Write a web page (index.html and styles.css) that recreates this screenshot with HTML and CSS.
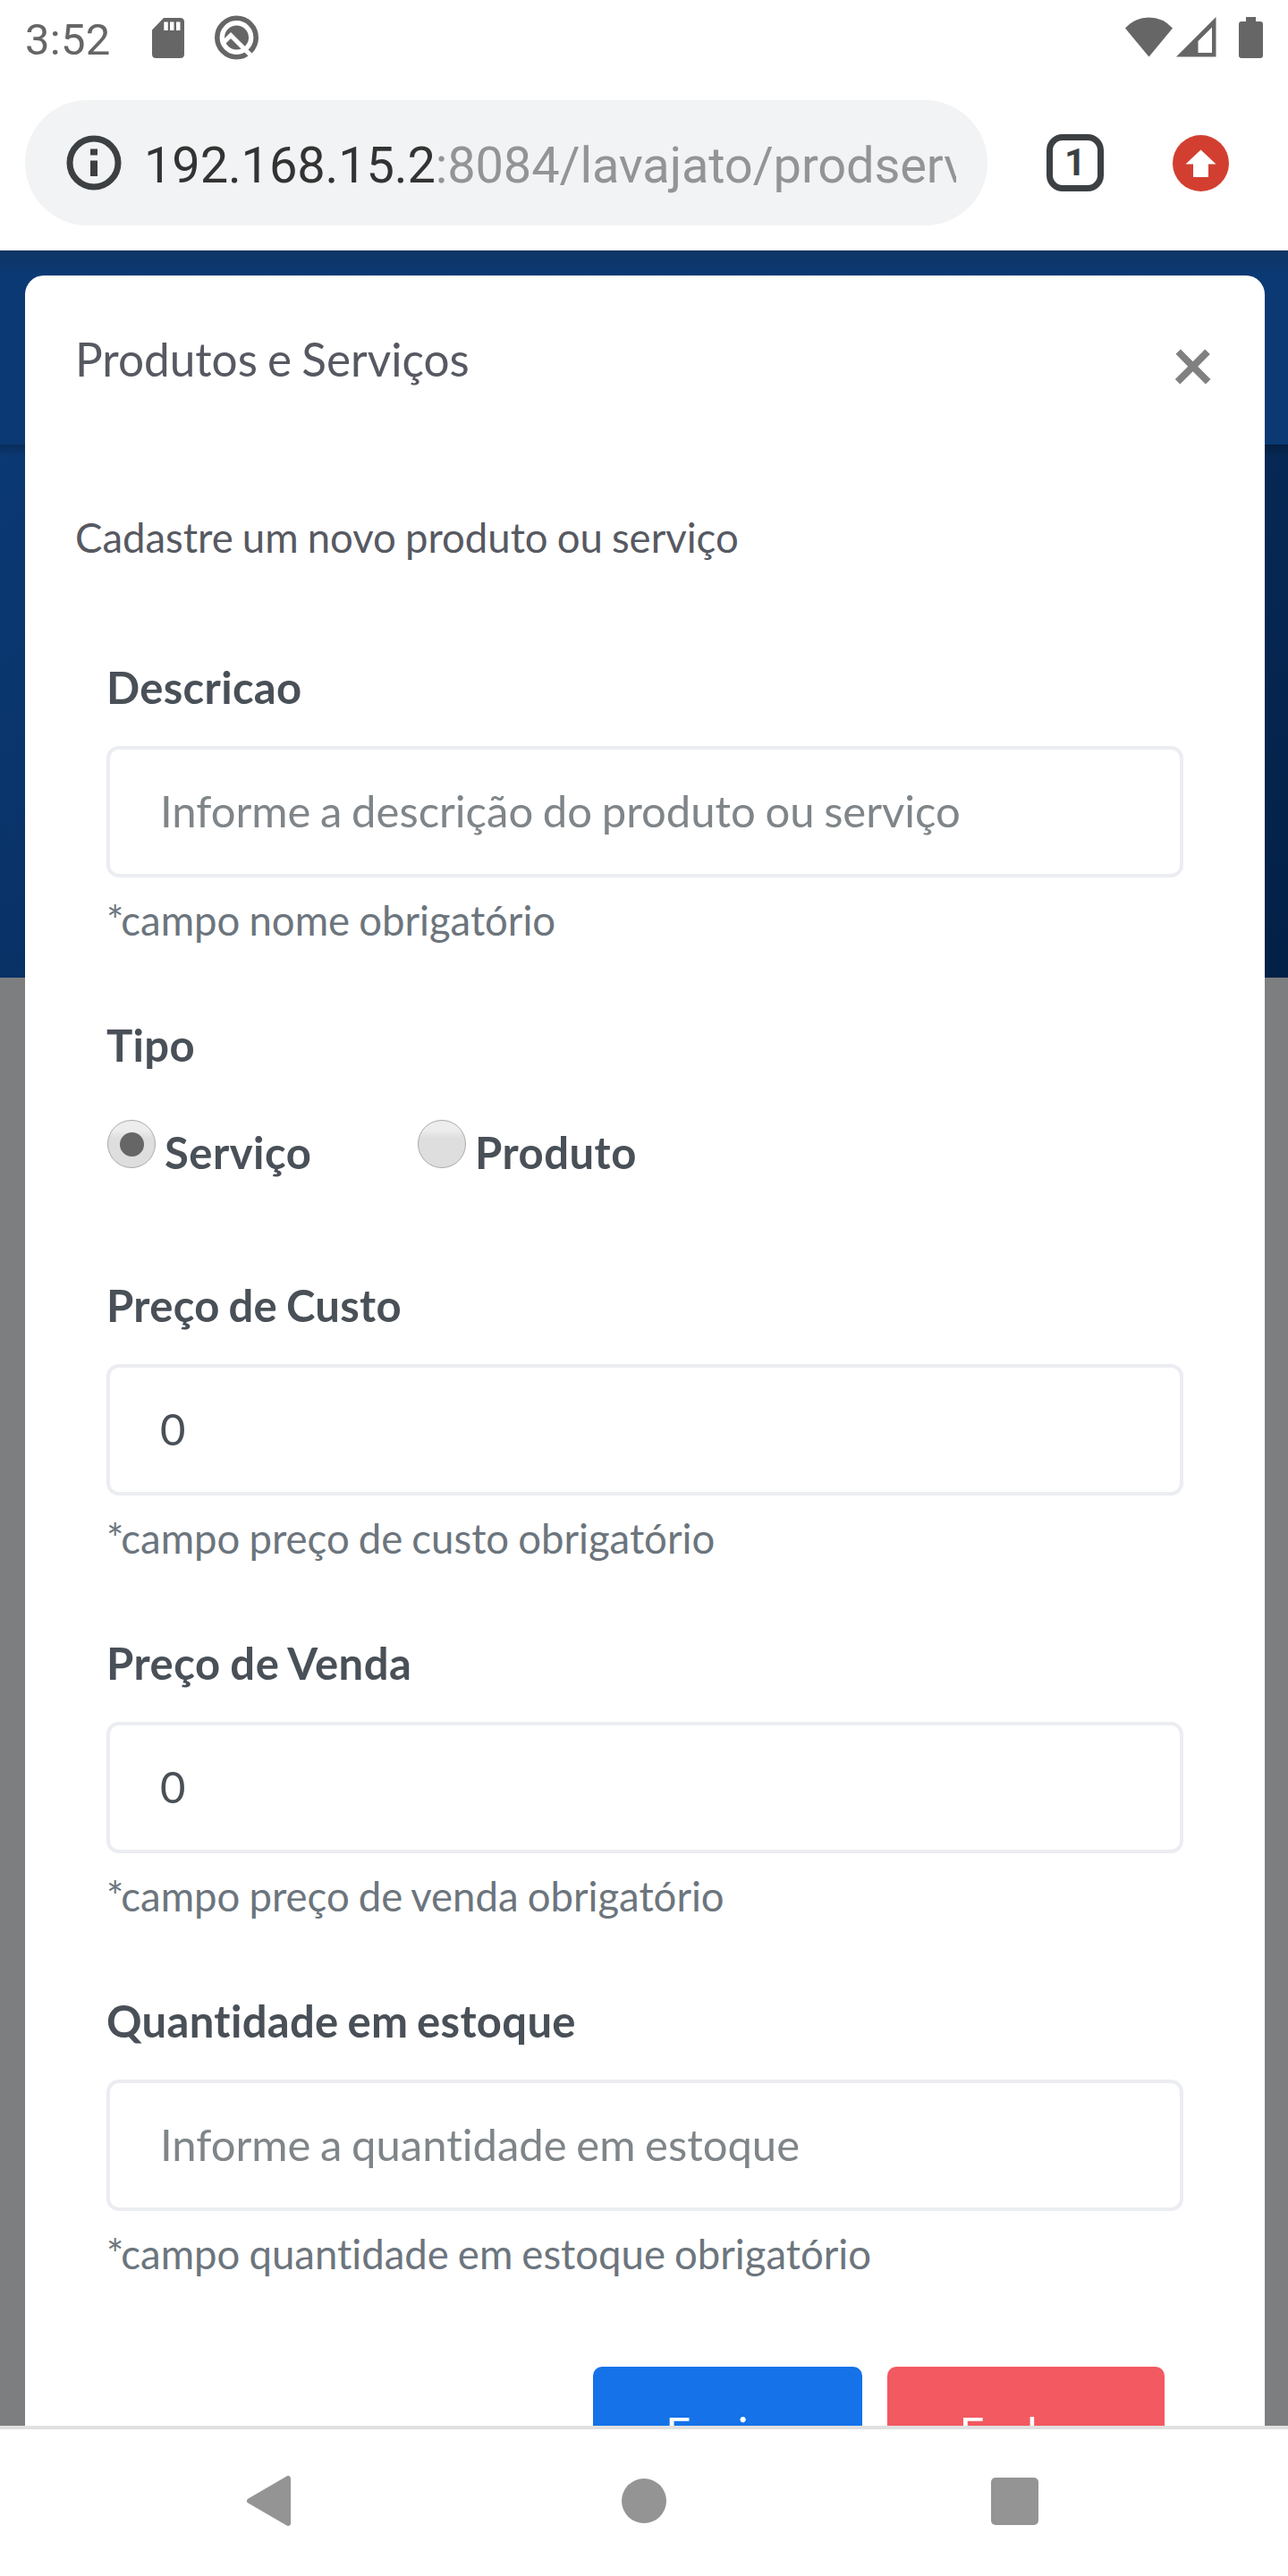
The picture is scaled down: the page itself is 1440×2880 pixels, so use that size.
FILE: index.html
```html
<!DOCTYPE html>
<html lang="pt-BR">
<head>
<meta charset="utf-8">
<title>Produtos e Serviços</title>
<link rel="stylesheet" href="styles.css">
</head>
<body>
<div class="phone">
  <header class="status">
    <span class="clock">3:52</span>
    <svg class="sd" width="36" height="45" viewBox="0 0 36 45"><path fill="#666" fill-rule="evenodd" d="M13 0H31.500Q36 0 36 4.500V40.500Q36 45 31.500 45H4.500Q0 45 0 40.500V13.500ZM13.300 4.500V14H17.800V4.500ZM20 4.500V14H24.500V4.500ZM27 4.500V14H31.500V4.500Z"/></svg>
    <svg class="q" width="50" height="50" viewBox="0 0 50 50"><circle cx="24.500" cy="25" r="21.700" fill="none" stroke="#666" stroke-width="5.600"/><circle cx="24.500" cy="25" r="13.500" fill="#666"/><path d="M10 30.500L18 22.500L42 46.500" fill="none" stroke="#fff" stroke-width="5"/></svg>
    <span class="grow"></span>
    <svg class="wifi" width="54" height="45" viewBox="0 0 54 45"><path fill="#666" d="M0 12.500Q11 .5 26.500 .5T53 12.500L26.500 44.500Z"/></svg>
    <svg class="cell" width="45" height="45" viewBox="0 0 45 45"><path fill="#666" fill-rule="evenodd" d="M0 44.500L44.500 0V44.500ZM24.500 27V40H40V11.500Z"/></svg>
    <svg class="battery" width="27" height="46" viewBox="0 0 27 46"><path fill="#666" d="M8 0H19V5H24Q27 5 27 8V43Q27 46 24 46H3Q0 46 0 43V8Q0 5 3 5H8Z"/></svg>
  </header>
  <div class="toolbar">
    <div class="omnibox">
      <svg width="62" height="62" viewBox="0 0 62 62"><circle cx="31" cy="31" r="27" fill="none" stroke="#3c4043" stroke-width="7"/><path fill="#3c4043" d="M27 15.500H35V22.500H27ZM27 28.500H35V46H27Z"/></svg>
      <div class="url">192.168.15.2<span class="path">:8084/lavajato/prodserv</span></div>
    </div>
    <div class="tabs">1</div>
    <svg class="update" width="63" height="63" viewBox="0 0 63 63"><circle cx="31.500" cy="31.500" r="31.500" fill="#d23f31"/><path fill="#fff" d="M31.500 16.500L48.500 32.500H40V47H23V32.500H14.500Z"/></svg>
  </div>
  <main class="page">
    <div class="backdrop"><div class="navbar"></div><div class="hero"></div></div>
    <section class="modal">
      <div class="modal-head"><h1 class="title">Produtos e Serviços</h1><span class="close">×</span></div>
      <p class="intro">Cadastre um novo produto ou serviço</p>
      <div class="form">
        <div class="group">
          <label class="label">Descricao</label>
          <div class="input placeholder">Informe a descrição do produto ou serviço</div>
          <small class="help"><span class="star">*</span>campo nome obrigatório</small>
        </div>
        <div class="group type">
          <label class="label">Tipo</label>
          <div class="radios">
            <span class="option"><i class="radio checked"></i><b>Serviço</b></span>
            <span class="option"><i class="radio"></i><b>Produto</b></span>
          </div>
        </div>
        <div class="group">
          <label class="label">Preço de Custo</label>
          <div class="input">0</div>
          <small class="help"><span class="star">*</span>campo preço de custo obrigatório</small>
        </div>
        <div class="group">
          <label class="label venda">Preço de Venda</label>
          <div class="input">0</div>
          <small class="help"><span class="star">*</span>campo preço de venda obrigatório</small>
        </div>
        <div class="group">
          <label class="label">Quantidade em estoque</label>
          <div class="input placeholder">Informe a quantidade em estoque</div>
          <small class="help"><span class="star">*</span>campo quantidade em estoque obrigatório</small>
        </div>
      </div>
      <div class="actions"><span class="btn send">Enviar</span><span class="btn dismiss">Fechar</span></div>
    </section>
  </main>
  <nav class="softkeys">
    <svg width="59" height="60" viewBox="0 0 59 60"><path fill="#949494" stroke="#949494" stroke-width="6" stroke-linejoin="round" d="M6 30L49 5V55Z"/></svg>
    <i class="home"></i>
    <i class="recent"></i>
  </nav>
</div>
</body>
</html>
```
FILE: styles.css
```css
* { box-sizing: border-box; }
body { margin: 0; background: #fff; }
.phone { width: 1440px; height: 2880px; display: flex; flex-direction: column; overflow: hidden; }
svg { display: block; flex: none; }

.status { height: 84px; display: flex; align-items: flex-start; padding: 0 28px; flex: none; }
.clock { font: 49px/56px Roboto, sans-serif; letter-spacing: .3px; color: #666; width: 142px; margin-top: 17px; }
.sd { margin-top: 20px; }
.q { margin: 17px 0 0 34px; }
.grow { flex: 1; }
.wifi { margin-top: 19px; }
.cell { margin: 19px 0 0 3px; }
.battery { margin: 19px 0 0 25px; }

.toolbar { height: 196px; display: flex; padding: 28px 66px 0 28px; flex: none; }
.omnibox { width: 1076px; height: 140px; border-radius: 70px; background: #f1f3f4; display: flex; align-items: center; padding-left: 46px; padding-right: 35px; }
.url { flex: 1; margin-left: 25px; padding-top: 5px; overflow: hidden; white-space: nowrap; font: 56px/76px Roboto, sans-serif; letter-spacing: -.15px; color: #333; }
.path { color: #929496; }
.tabs { width: 64px; height: 64px; margin: 38px 0 0 66px; border: 7px solid #3c4043; border-radius: 18px; font: bold 42px/50px Roboto, sans-serif; color: #3c4043; text-align: center; }
.update { margin: 39px 0 0 77px; }

.page { height: 2432px; flex: none; display: grid; overflow: hidden; font-family: Lato, sans-serif; font-variant-ligatures: none; }
.backdrop { grid-area: 1 / 1; background: #7d7e80; }
.navbar { height: 217px; background: linear-gradient(#0f3565, #0b3974 28px); }
.hero { height: 596px; background: linear-gradient(rgba(0,0,0,.22), transparent 14px), linear-gradient(-45deg, #032147, #0b3974); }

.modal { grid-area: 1 / 1; margin: 28px 26px 0 28px; height: 2600px; background: #fff; border-radius: 21px; }
.modal-head { height: 196px; display: flex; justify-content: space-between; padding: 63px 56px 0; }
.title { margin: 0; font-size: 51.3px; line-height: 60px; font-weight: 400; word-spacing: -2px; color: #575962; }
.close { font-size: 84px; line-height: 70px; font-weight: 700; color: #808080; }
.intro { margin: 66px 56px 0; height: 62px; font-size: 45.5px; line-height: 62px; word-spacing: -1.6px; color: #575962; }
.form { padding: 101px 91px 0; }
.group { height: 400px; }
.group.type { height: 291px; }
.label { display: block; height: 101px; font-size: 49px; line-height: 70px; font-weight: 700; letter-spacing: .32px; word-spacing: -2.4px; color: #495057; white-space: nowrap; }
.venda { letter-spacing: .5px; word-spacing: -1.6px; }
.input { height: 147px; border: 4px solid #ebedf2; border-radius: 14px; padding: 0 56px; font-size: 49px; line-height: 136px; word-spacing: -1.9px; color: #495057; white-space: nowrap; }
.placeholder { color: #7f8589; }
.help { display: block; margin-top: 17px; font-size: 45.5px; line-height: 62px; word-spacing: -1.6px; color: #6c757d; white-space: nowrap; }
.star { letter-spacing: -3px; }
.radios { display: flex; padding-left: 1px; }
.option { display: flex; width: 347px; }
.option b { margin: 17px 0 0 10px; font-size: 49px; line-height: 74px; letter-spacing: .5px; color: #495057; }
.radio { width: 54px; height: 54px; border-radius: 50%; border: 1px solid #aaa; margin-top: 18px; background: linear-gradient(#ededed 20%, #dedede 38%); display: flex; align-items: center; justify-content: center; }
.radio.checked::after { content: ""; width: 27px; height: 27px; border-radius: 50%; background: #666; }
.actions { display: flex; gap: 28px; padding-left: 635px; margin-top: 22px; }
.btn { height: 147px; border-radius: 10px; color: #fff; font-size: 49px; line-height: 147px; text-align: center; letter-spacing: .3px; padding-right: 3px; }
.send { width: 301px; background: #1572e8; }
.dismiss { width: 310px; background: #f25961; }

.softkeys { height: 168px; flex: none; border-top: 4px solid #e0e0e0; background: #fff; display: flex; align-items: center; justify-content: space-between; padding: 0 279px 4px 273px; }
.home { width: 50px; height: 50px; border-radius: 50%; background: #949494; }
.recent { width: 53px; height: 53px; border-radius: 5px; background: #949494; }
```
